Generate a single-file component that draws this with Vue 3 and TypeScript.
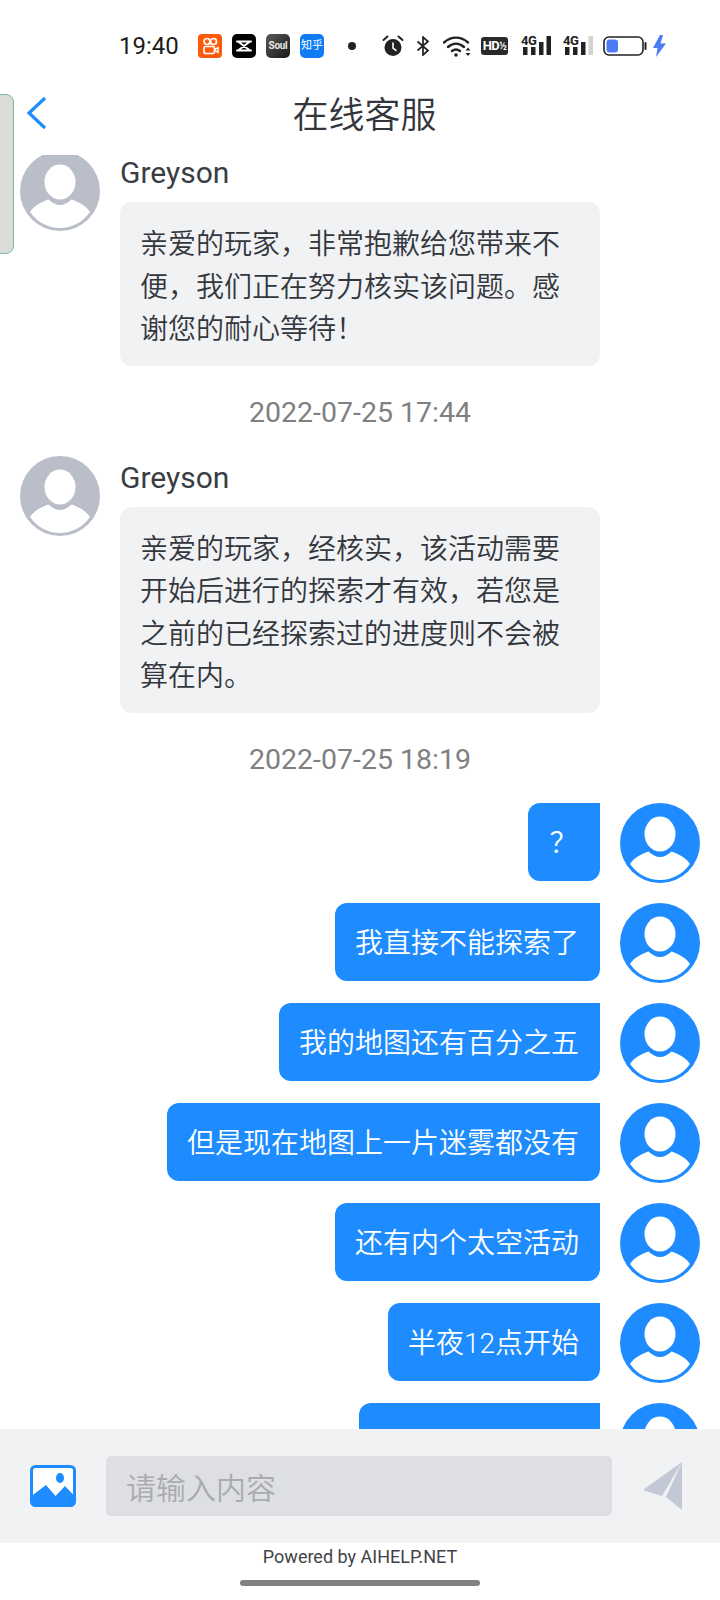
<template>
  <div class="page">
    <div class="status-bar">
      <span class="clock">19:40</span>
      <div class="app-icons">
        <svg class="app" viewBox="0 0 24 24">
          <rect width="24" height="24" rx="4" fill="#ff5a0a" />
          <circle cx="9" cy="7.500" r="3" fill="none" stroke="#fff" stroke-width="1.700" />
          <circle cx="15.500" cy="7.500" r="3" fill="none" stroke="#fff" stroke-width="1.700" />
          <rect x="6" y="12.500" width="10.500" height="7" rx="1.600" fill="none" stroke="#fff" stroke-width="1.700" />
          <path d="M16.500 15.500l3.500-1.800v4.600l-3.500-1.800" fill="none" stroke="#fff" stroke-width="1.500" />
        </svg>
        <svg class="app" viewBox="0 0 24 24">
          <rect width="24" height="24" rx="5" fill="#000" />
          <path d="M5 7.500h14M5 16.500h14M6 7.500l12 9M18 7.500l-12 9" fill="none" stroke="#fff" stroke-width="2" stroke-linecap="round" />
        </svg>
        <div class="app app--soul">Soul</div>
        <div class="app app--zhihu">知乎</div>
      </div>
      <span class="dot"></span>
      <svg class="ic-alarm" viewBox="0 0 22 22">
        <circle cx="11" cy="12.500" r="8.500" fill="#222" />
        <path d="M1.500 5L5.500 1.500M20.500 5L16.500 1.500" stroke="#222" stroke-width="2" stroke-linecap="round" />
        <path d="M11 8v5l3 2.400" fill="none" stroke="#fff" stroke-width="1.600" stroke-linecap="round" />
      </svg>
      <svg class="ic-bt" viewBox="0 0 14 20">
        <path d="M1.500 5.500L12 14.500L7 19V1L12 5.500L1.500 14.500" fill="none" stroke="#222" stroke-width="1.700" />
      </svg>
      <svg class="ic-wifi" viewBox="0 0 28 22">
        <path d="M1 7.500C8 1 18 1 25 7.500M5 12C10 7.500 16 7.500 21 12M9 16C11.500 14 14.500 14 17 16" fill="none" stroke="#222" stroke-width="2.400" stroke-linecap="round" />
        <circle cx="13" cy="20" r="1.800" fill="#222" />
        <path d="M25 12.500l2.500 3h-5zM25 21l2.500-3h-5z" fill="#222" />
      </svg>
      <div class="hd">HD<span class="hd__sub">½</span></div>
      <div class="signal">
        <span class="signal__label">4G</span>
        <svg viewBox="0 0 31 22">
          <rect x="2" y="12" width="4.500" height="8" fill="#222" />
          <rect x="10" y="12" width="4.500" height="8" fill="#222" />
          <rect x="18" y="7" width="4.500" height="13" fill="#222" />
          <rect x="25.500" y="1" width="4.500" height="19" fill="#222" />
        </svg>
      </div>
      <div class="signal">
        <span class="signal__label">4G</span>
        <svg viewBox="0 0 31 22">
          <rect x="2" y="12" width="4.500" height="8" fill="#222" />
          <rect x="10" y="12" width="4.500" height="8" fill="#222" />
          <rect x="18" y="7" width="4.500" height="13" fill="#222" />
          <rect x="25.500" y="1" width="4.500" height="19" fill="#d2d2d2" />
        </svg>
      </div>
      <svg class="ic-battery" viewBox="0 0 44 20">
        <rect x="1" y="1" width="39" height="18" rx="5" fill="#fff" stroke="#222" stroke-width="1.600" />
        <rect x="3.500" y="3.500" width="11.500" height="13" rx="3" fill="#4c7bf3" />
        <path d="M42.500 7v6" stroke="#222" stroke-width="2" stroke-linecap="round" />
      </svg>
      <svg class="ic-bolt" viewBox="0 0 13 22">
        <path d="M7 0L0 13h4.500L3 22l10-13.500H7.500L10 0z" fill="#4c7bf3" />
      </svg>
    </div>

    <header class="nav">
      <svg class="nav__back" viewBox="0 0 22 34">
        <path d="M19 2L3 17l16 15" fill="none" stroke="#1e8cff" stroke-width="3.200" />
      </svg>
      <h1 class="nav__title">在线客服</h1>
    </header>

    <div class="side-tab"></div>

    <main class="chat">
      <div class="chat__inner">
        <template v-for="(item, i) in items" :key="i">
          <div v-if="item.kind === 'time'" class="time">{{ item.text }}</div>
          <div v-else-if="item.kind === 'in'" class="row row--in">
            <svg class="avatar" viewBox="0 0 80 80">
              <circle cx="40" cy="40" r="40" fill="#b9bec8" />
              <ellipse cx="40" cy="31" rx="15.500" ry="17.500" fill="#fff" />
              <path :d="bodyPath" fill="#fff" />
            </svg>
            <div class="row__body">
              <div class="name">{{ item.name }}</div>
              <div class="bubble bubble--in">{{ item.text }}</div>
            </div>
          </div>
          <div v-else class="row row--out">
            <div
              class="bubble bubble--out"
              :style="item.width ? { width: item.width + 'px' } : undefined"
            >
              {{ item.text }}
            </div>
            <svg class="avatar" viewBox="0 0 80 80">
              <circle cx="40" cy="40" r="40" fill="#1e8cff" />
              <ellipse cx="40" cy="31" rx="15.500" ry="17.500" fill="#fff" />
              <path :d="bodyPath" fill="#fff" />
            </svg>
          </div>
        </template>
      </div>
    </main>

    <div class="composer">
      <svg class="composer__pic" viewBox="0 0 46 42">
        <rect x="1.500" y="1.500" width="43" height="39" rx="4" fill="#fff" stroke="#1e8cff" stroke-width="3" />
        <path d="M1.500 31L16 20l9.500 11L35 21l9.500 10v6a4 4 0 0 1-4 4h-35a4 4 0 0 1-4-4z" fill="#1e8cff" />
        <ellipse cx="30" cy="13" rx="4" ry="5" fill="#1e8cff" />
      </svg>
      <div class="composer__input">请输入内容</div>
      <svg class="composer__send" viewBox="0 0 40 50">
        <path d="M39 1L1 28c-.5.800 0 1.500 1 1.800L19 35z" fill="#c3c8d6" />
        <path d="M39 1V49L23 36z" fill="#c3c8d6" />
      </svg>
    </div>

    <footer class="powered">Powered by AIHELP.NET</footer>
    <div class="home-bar"></div>
  </div>
</template>

<script setup lang="ts">
interface ChatItem {
  kind: 'time' | 'in' | 'out'
  text: string
  name?: string
  width?: number
}

const bodyPath =
  'M10 61C14 55 21 51 28.500 48.500C32 52 36 54 40 54C44 54 48 52 51.500 48.500C59 51 66 55 70 61C63 71 52 77 40 77C28 77 17 71 10 61Z'

const items: ChatItem[] = [
  {
    kind: 'in',
    name: 'Greyson',
    text: '亲爱的玩家，非常抱歉给您带来不便，我们正在努力核实该问题。感谢您的耐心等待！'
  },
  { kind: 'time', text: '2022-07-25 17:44' },
  {
    kind: 'in',
    name: 'Greyson',
    text: '亲爱的玩家，经核实，该活动需要开始后进行的探索才有效，若您是之前的已经探索过的进度则不会被算在内。'
  },
  { kind: 'time', text: '2022-07-25 18:19' },
  { kind: 'out', text: '？', width: 72 },
  { kind: 'out', text: '我直接不能探索了' },
  { kind: 'out', text: '我的地图还有百分之五' },
  { kind: 'out', text: '但是现在地图上一片迷雾都没有' },
  { kind: 'out', text: '还有内个太空活动' },
  { kind: 'out', text: '半夜12点开始' },
  // 这条被输入栏挡住了，看不到文字
  { kind: 'out', text: '', width: 241 }
]
</script>

<style>
html,
body {
  margin: 0;
  background: #ffffff;
}
</style>

<style scoped>
.page {
  position: relative;
  width: 720px;
  height: 1600px;
  overflow: hidden;
  background: #ffffff;
  font-family: Roboto, 'Noto Sans CJK SC', sans-serif;
  color: #33373d;
}

.status-bar {
  display: flex;
  align-items: center;
  height: 46px;
  padding: 23px 0 0 119px;
  color: #222222;
}

.clock {
  width: 79px;
  font-size: 24px;
  font-weight: 400;
  line-height: 46px;
  color: #1c1c1c;
}

.app-icons {
  display: flex;
  gap: 10px;
}

.app {
  display: block;
  width: 24px;
  height: 24px;
}

.app--soul {
  border-radius: 5px;
  background: linear-gradient(135deg, #5a5a5a, #161616);
  color: #e8e8e8;
  font-size: 10px;
  font-weight: 700;
  line-height: 24px;
  text-align: center;
  letter-spacing: -0.3px;
}

.app--zhihu {
  border-radius: 5px;
  background: #0f7cf5;
  color: #ffffff;
  font-size: 11px;
  line-height: 24px;
  text-align: center;
}

.dot {
  width: 8px;
  height: 8px;
  margin-left: 24px;
  border-radius: 50%;
  background: #222222;
}

.ic-alarm {
  width: 22px;
  height: 22px;
  margin-left: 26px;
}

.ic-bt {
  width: 14px;
  height: 20px;
  margin-left: 12px;
}

.ic-wifi {
  width: 28px;
  height: 22px;
  margin-left: 13px;
}

.hd {
  width: 27px;
  height: 18px;
  margin-left: 10px;
  border-radius: 3px;
  background: #2a2a2a;
  color: #ffffff;
  font-size: 13px;
  font-weight: 700;
  line-height: 18px;
  text-align: center;
  white-space: nowrap;
  letter-spacing: -0.5px;
}

.hd__sub {
  font-size: 10px;
}

.signal {
  position: relative;
  width: 31px;
  height: 22px;
  margin-left: 13px;
}

.signal svg {
  display: block;
  width: 31px;
  height: 22px;
}

.signal + .signal {
  margin-left: 11px;
}

.signal__label {
  position: absolute;
  left: 0;
  top: -1px;
  font-size: 13px;
  font-weight: 700;
  line-height: 13px;
  letter-spacing: -0.5px;
  color: #222222;
}

.ic-battery {
  width: 44px;
  height: 20px;
  margin-left: 9px;
}

.ic-bolt {
  width: 13px;
  height: 22px;
  margin-left: 6px;
}

.nav {
  position: relative;
  box-sizing: border-box;
  height: 86px;
  padding: 8px 0 0 9px;
  display: flex;
  align-items: center;
  justify-content: center;
}

.nav__back {
  position: absolute;
  left: 26px;
  top: 27px;
  width: 22px;
  height: 34px;
}

.nav__title {
  margin: 0;
  font-size: 36px;
  font-weight: 350;
  line-height: 50px;
  color: #33373d;
}

.side-tab {
  position: absolute;
  left: -6px;
  top: 94px;
  width: 18px;
  height: 158px;
  border: 1px solid #7fb79a;
  border-radius: 8px;
  background: #d9dcd9;
}

.chat {
  height: 1274px;
  overflow: hidden;
}

.chat__inner {
  display: flex;
  flex-direction: column;
  margin-top: -4px;
  padding: 0 20px;
}

.row {
  display: flex;
  align-items: flex-start;
  gap: 20px;
}

.row--out {
  justify-content: flex-end;
  margin-bottom: 20px;
}

.avatar {
  flex: none;
  width: 80px;
  height: 80px;
}

.row__body {
  width: 480px;
  padding-top: 4px;
}

.name {
  font-size: 30px;
  line-height: 36px;
  margin-bottom: 11px;
  color: #3a3e44;
}

.bubble {
  box-sizing: border-box;
  font-size: 28px;
  font-weight: 350;
  line-height: 42.500px;
  border-radius: 12px;
}

.bubble--in {
  padding: 22px 20px 14px;
  background: #f1f2f4;
  color: #33373d;
}

.bubble--out {
  height: 78px;
  padding: 20px 21px 0 20px;
  background: #1e8cff;
  color: #ffffff;
  text-align: center;
  border-top-right-radius: 0;
}

.time {
  margin: 26px 0 22px;
  font-size: 28.500px;
  line-height: 42px;
  text-align: center;
  color: #808080;
}

.composer {
  height: 114px;
  display: flex;
  align-items: center;
  background: #f1f2f4;
}

.composer__pic {
  width: 46px;
  height: 42px;
  margin-left: 30px;
}

.composer__input {
  box-sizing: border-box;
  width: 506px;
  height: 60px;
  margin-left: 30px;
  padding-left: 20px;
  border-radius: 5px;
  background: #dddfe2;
  color: #a9abb0;
  font-size: 30px;
  font-weight: 350;
  line-height: 65px;
}

.composer__send {
  width: 40px;
  height: 50px;
  margin-left: 31px;
}

.powered {
  margin-top: 2px;
  font-size: 18px;
  line-height: 24px;
  text-align: center;
  color: #3f4348;
}

.home-bar {
  width: 240px;
  height: 6px;
  margin: 11px auto 0;
  border-radius: 3px;
  background: #808080;
}
</style>
